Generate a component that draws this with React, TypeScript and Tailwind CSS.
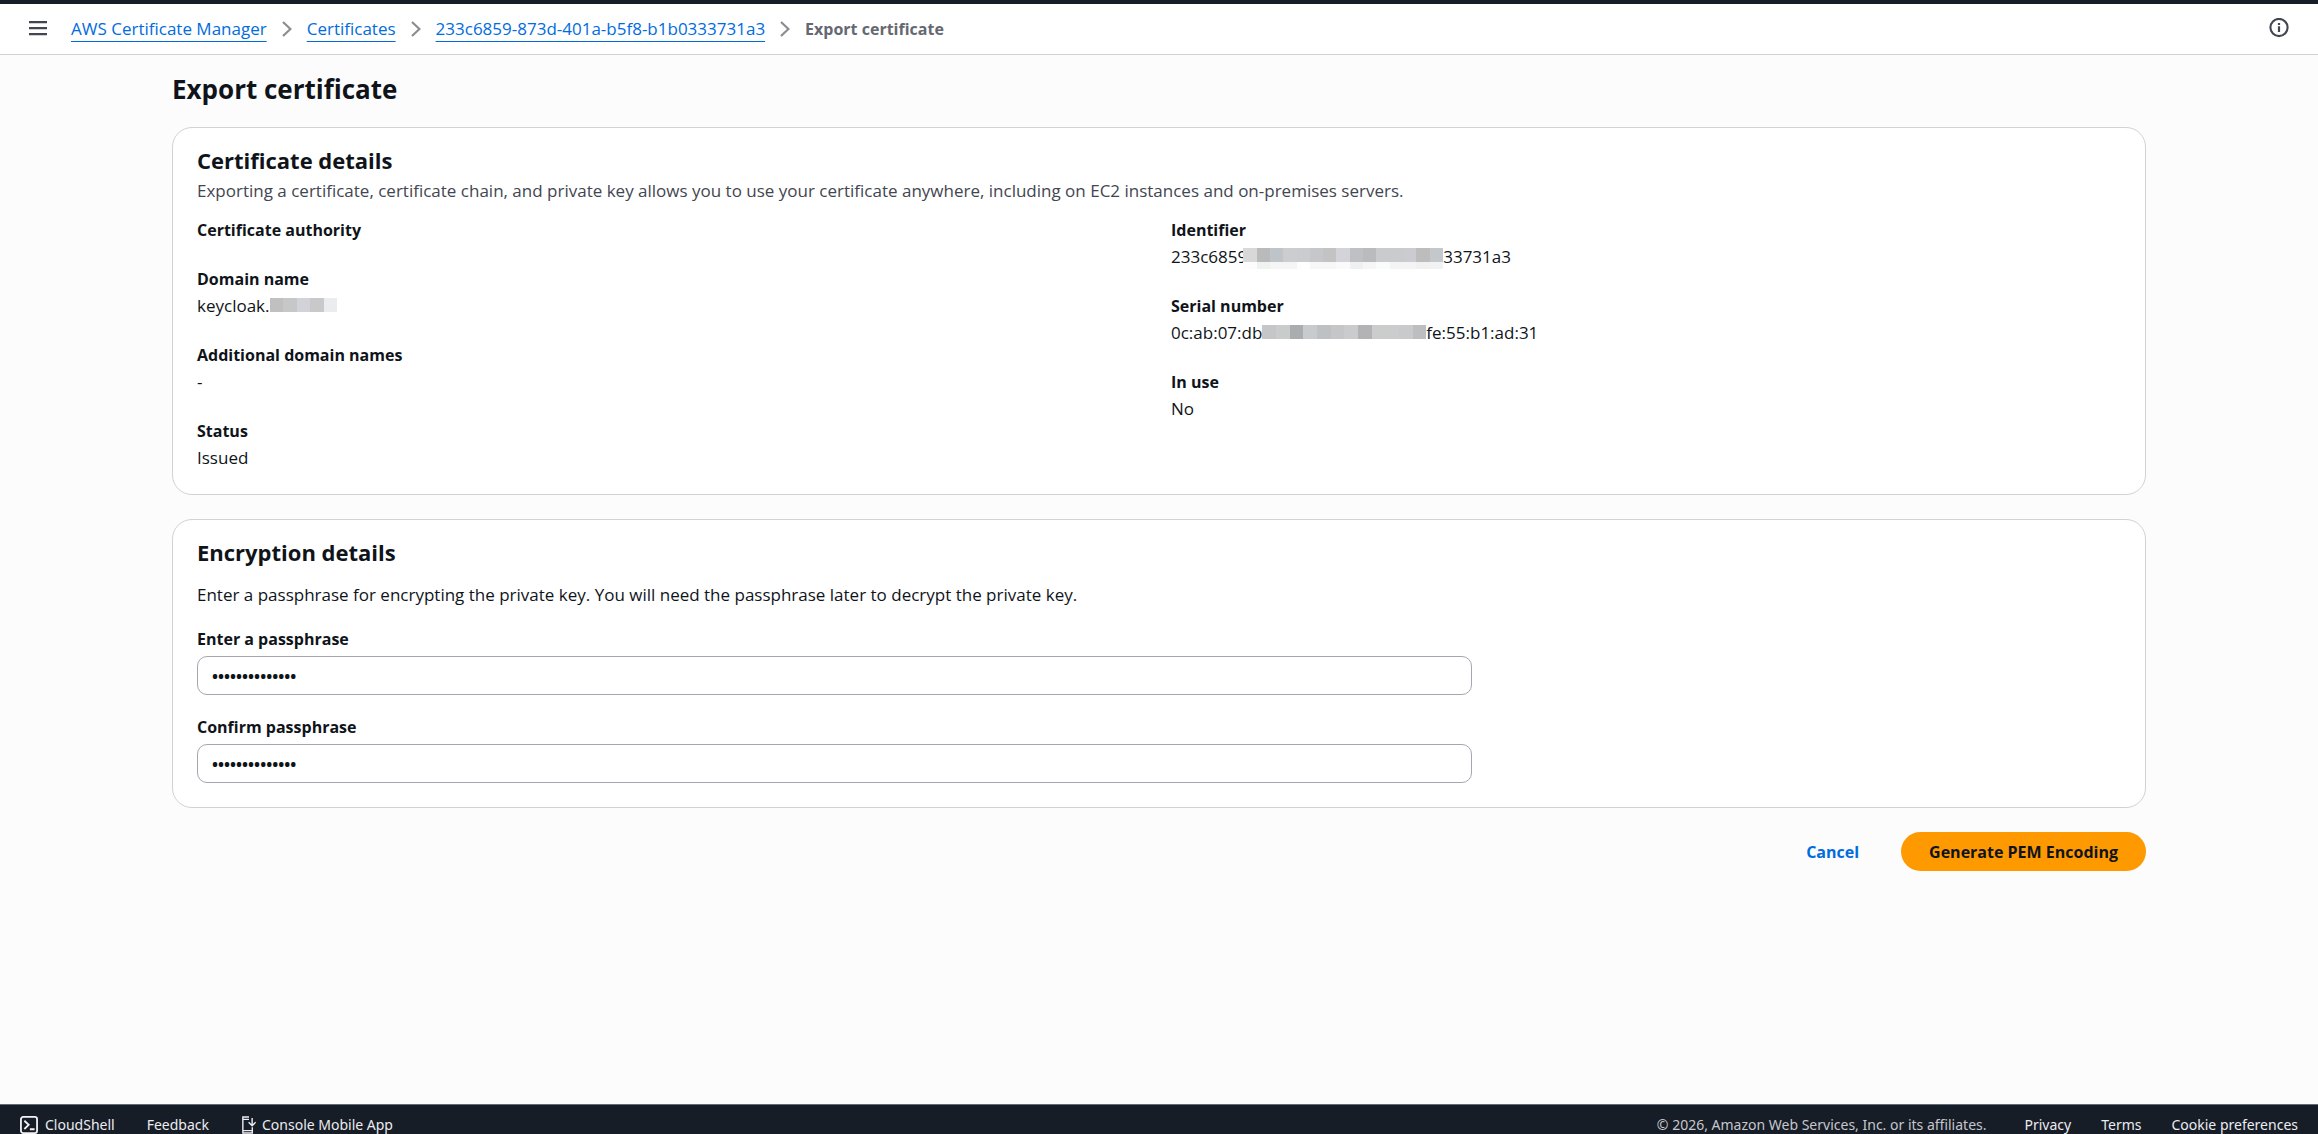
import type { ReactNode } from "react";

const breadcrumbs = [
  { label: "AWS Certificate Manager", href: "#acm" },
  { label: "Certificates", href: "#certificates" },
  { label: "233c6859-873d-401a-b5f8-b1b0333731a3", href: "#certificate" },
];

const domainMask = ["bg-[#c0c0c1]", "bg-[#c6c7c9]", "bg-[#d2d3d8]", "bg-[#c9c9cb]", "bg-[#ebecee]"];

const identifierMask = [
  "bg-[#d8d8d8]",
  "bg-[#b9babc]",
  "bg-[#bfc4c8]",
  "bg-[#cccdcf]",
  "bg-[#cbcccf]",
  "bg-[#c6c7ca]",
  "bg-[#c3c3c4]",
  "bg-[#d3d3d9]",
  "bg-[#bec0c3]",
  "bg-[#babbbc]",
  "bg-[#c9cbcd]",
  "bg-[#cacbcd]",
  "bg-[#cbcccf]",
  "bg-[#bdbdbe]",
  "bg-[#c5c8cb]",
];

const identifierFade = [
  "bg-[#fcfcfc]",
  "bg-[#f0f2f2]",
  "bg-[#f5f5f6]",
  "bg-[#f5f5f6]",
  "bg-[#fefefe]",
  "bg-[#f7f7f8]",
  "bg-[#f7f7f7]",
  "bg-[#fafafb]",
  "bg-[#eff0f2]",
  "bg-[#f6f6f6]",
  "bg-[#fafcfb]",
  "bg-[#f4f4f5]",
  "bg-[#f4f4f5]",
  "bg-[#f1f1f1]",
  "bg-[#f2f2f3]",
];

const serialMask = [
  "bg-[#c5c6c8]",
  "bg-[#cacbcb]",
  "bg-[#a9adb0]",
  "bg-[#c9cacb]",
  "bg-[#bdc1c4]",
  "bg-[#c4c6c8]",
  "bg-[#cacbcc]",
  "bg-[#b3b3b5]",
  "bg-[#cbcccc]",
  "bg-[#cbcccc]",
  "bg-[#c9cacb]",
  "bg-[#bdbec0]",
];

function Cells({ cells, className }: { cells: string[]; className: string }) {
  return (
    <span className={`flex ${className}`}>
      {cells.map((cell, index) => (
        <span key={index} className={`flex-1 ${cell}`} />
      ))}
    </span>
  );
}

function Field({ label, children }: { label: string; children?: ReactNode }) {
  return (
    <div>
      <dt className="text-base leading-6 font-bold">{label}</dt>
      {children && <dd className="mt-[3px] flex leading-6">{children}</dd>}
    </div>
  );
}

function ChevronIcon() {
  return (
    <svg className="h-4 w-[10px] shrink-0" viewBox="0 0 10 16" fill="none" stroke="#8c8c94" strokeWidth="2.2" aria-hidden="true">
      <path d="M1 1l7.4 7L1 15" />
    </svg>
  );
}

function PassphraseField({ id, label }: { id: string; label: string }) {
  return (
    <div>
      <label htmlFor={id} className="block text-base leading-6 font-bold">
        {label}
      </label>
      <input
        id={id}
        type="password"
        defaultValue="passphrase-123"
        className="mt-[5px] block h-[39px] w-full rounded-[10px] border border-[#a4a7b0] bg-white px-[14px] text-base font-bold outline-none"
      />
    </div>
  );
}

export default function App() {
  return (
    <div className="flex min-h-screen flex-col bg-[#fcfcfd] font-['Open_Sans','Noto_Sans',sans-serif] text-[17px] text-[#0f141a]">
      <div className="h-1 bg-[#161d26]" />

      <header className="flex h-[51px] items-center border-b border-[#d0d2d8] bg-white px-[29px]">
        <button type="button" aria-label="Open navigation" className="mr-6 shrink-0">
          <svg className="block h-4 w-[18px]" viewBox="0 0 18 16" stroke="#424650" strokeWidth="2.2" aria-hidden="true">
            <path d="M0 1.2h18M0 7.2h18M0 13.2h18" />
          </svg>
        </button>
        <nav aria-label="Breadcrumbs">
          <ol className="flex items-center gap-[15px] leading-6">
            {breadcrumbs.map((crumb) => (
              <li key={crumb.label} className="flex items-center gap-[15px]">
                <a href={crumb.href} className="text-[#006ce0] underline decoration-1 underline-offset-[6px]">
                  {crumb.label}
                </a>
                <ChevronIcon />
              </li>
            ))}
            <li className="text-base leading-6 font-bold text-[#656871]">Export certificate</li>
          </ol>
        </nav>
        <button type="button" aria-label="Info" className="ml-auto">
          <svg className="block h-[22px] w-5" viewBox="0 0 20 22" fill="none" stroke="#424650" aria-hidden="true">
            <circle cx="10" cy="9.5" r="8.6" strokeWidth="2.1" />
            <path d="M10 8.3v5.6M10 4.9v2.2" strokeWidth="2.2" />
          </svg>
        </button>
      </header>

      <main className="mx-auto w-full max-w-[1974px] pt-4">
        <h1 className="text-[26px] leading-9 font-bold">Export certificate</h1>

        <section className="mt-5 rounded-[20px] border border-[#d0d2d8] bg-white px-6 pt-[18px] pb-6">
          <h2 className="text-[22px] leading-7 font-bold">Certificate details</h2>
          <p className="mt-[5px] leading-6 text-[#424650]">
            Exporting a certificate, certificate chain, and private key allows you to use your certificate anywhere,
            including on EC2 instances and on-premises servers.
          </p>
          <div className="mt-[15px] grid grid-cols-2 gap-6">
            <dl className="space-y-[25px]">
              <Field label="Certificate authority" />
              <Field label="Domain name">
                keycloak.
                <Cells cells={domainMask} className="mt-1 h-[14px] w-[68px]" />
              </Field>
              <Field label="Additional domain names">-</Field>
              <Field label="Status">Issued</Field>
            </dl>
            <dl className="space-y-[25px]">
              <Field label="Identifier">
                233c6859
                <span className="relative -ml-1 pt-[3px]">
                  <Cells cells={identifierMask} className="h-[14px] w-[200px]" />
                  <Cells cells={identifierFade} className="h-[7px] w-[200px]" />
                </span>
                33731a3
              </Field>
              <Field label="Serial number">
                0c:ab:07:db
                <Cells cells={serialMask} className="mt-1 h-[14px] w-[164px]" />
                fe:55:b1:ad:31
              </Field>
              <Field label="In use">No</Field>
            </dl>
          </div>
        </section>

        <form onSubmit={(event) => event.preventDefault()}>
          <section className="mt-6 rounded-[20px] border border-[#d0d2d8] bg-white px-6 pt-[18px] pb-6">
            <h2 className="text-[22px] leading-7 font-bold">Encryption details</h2>
            <p className="mt-[17px] leading-6">
              Enter a passphrase for encrypting the private key. You will need the passphrase later to decrypt the
              private key.
            </p>
            <div className="mt-5 grid grid-cols-3 gap-6">
              <div className="col-span-2 space-y-5">
                <PassphraseField id="passphrase" label="Enter a passphrase" />
                <PassphraseField id="confirm-passphrase" label="Confirm passphrase" />
              </div>
            </div>
          </section>

          <div className="mt-6 flex items-center justify-end gap-[14px] text-base font-bold">
            <button type="button" className="h-[39px] rounded-full px-7 text-[#006ce0]">
              Cancel
            </button>
            <button type="submit" className="h-[39px] rounded-full bg-[#ff9900] px-7">
              Generate PEM Encoding
            </button>
          </div>
        </form>
      </main>

      <footer className="mt-auto flex h-[30px] items-start border-t border-[#5f6b7a] bg-[#161d26] px-5 pt-[11px] font-['Noto_Sans',sans-serif] text-sm leading-[18px] text-[#ebebf0]">
        <a href="#cloudshell" className="flex gap-[7px]">
          <svg className="size-[18px]" viewBox="0 0 19 19" fill="none" stroke="#f3f3f7" strokeWidth="1.9" aria-hidden="true">
            <rect x="1" y="1" width="17" height="17" rx="2.4" />
            <path d="M4.6 5l4.6 4.3-4.6 4.4M10.4 14h5" />
          </svg>
          CloudShell
        </a>
        <a href="#feedback" className="ml-8">
          Feedback
        </a>
        <a href="#mobile" className="ml-8 flex gap-[5px]">
          <svg className="h-[18px] w-4" viewBox="0 0 16 19" fill="none" stroke="#ebebf0" strokeWidth="1.5" aria-hidden="true">
            <path d="M8 1H1.5v17h10v-6M1.5 3.6H8M1.5 15.4h10M11.3 2v7.6M7.6 6.6l3.7 3.6L15 6.6" />
          </svg>
          Console Mobile App
        </a>
        <p className="ml-auto text-[#c6c6cd]">© 2026, Amazon Web Services, Inc. or its affiliates.</p>
        <a href="#privacy" className="ml-[38px]">
          Privacy
        </a>
        <a href="#terms" className="ml-[30px]">
          Terms
        </a>
        <a href="#cookies" className="ml-[30px]">
          Cookie preferences
        </a>
      </footer>
    </div>
  );
}
